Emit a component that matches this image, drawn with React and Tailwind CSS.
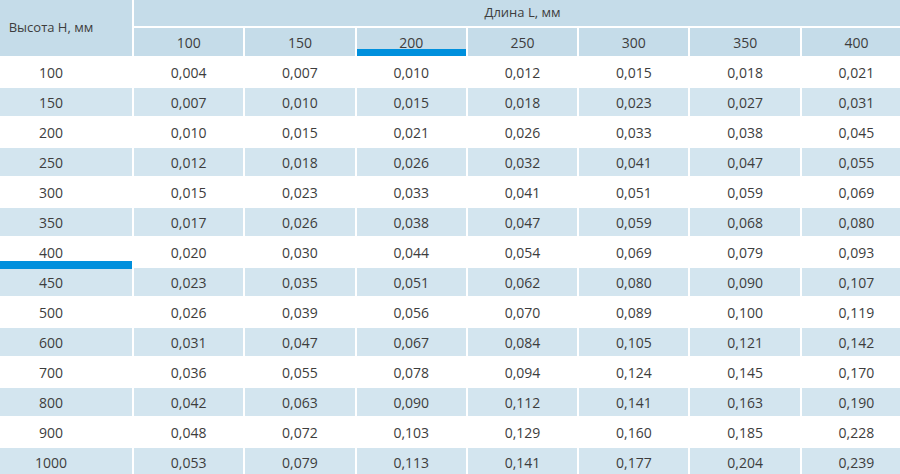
import React from "react";

const cols = ["100", "150", "200", "250", "300", "350", "400"];
const rows = [
  ["100", "0,004", "0,007", "0,010", "0,012", "0,015", "0,018", "0,021"],
  ["150", "0,007", "0,010", "0,015", "0,018", "0,023", "0,027", "0,031"],
  ["200", "0,010", "0,015", "0,021", "0,026", "0,033", "0,038", "0,045"],
  ["250", "0,012", "0,018", "0,026", "0,032", "0,041", "0,047", "0,055"],
  ["300", "0,015", "0,023", "0,033", "0,041", "0,051", "0,059", "0,069"],
  ["350", "0,017", "0,026", "0,038", "0,047", "0,059", "0,068", "0,080"],
  ["400", "0,020", "0,030", "0,044", "0,054", "0,069", "0,079", "0,093"],
  ["450", "0,023", "0,035", "0,051", "0,062", "0,080", "0,090", "0,107"],
  ["500", "0,026", "0,039", "0,056", "0,070", "0,089", "0,100", "0,119"],
  ["600", "0,031", "0,047", "0,067", "0,084", "0,105", "0,121", "0,142"],
  ["700", "0,036", "0,055", "0,078", "0,094", "0,124", "0,145", "0,170"],
  ["800", "0,042", "0,063", "0,090", "0,112", "0,141", "0,163", "0,190"],
  ["900", "0,048", "0,072", "0,103", "0,129", "0,160", "0,185", "0,228"],
  ["1000", "0,053", "0,079", "0,113", "0,141", "0,177", "0,204", "0,239"],
];

export default function App() {
  return (
    <div
      className="w-[900px] h-[474px] overflow-hidden bg-white text-[14px] text-[#3d3d3d]"
      style={{ fontFamily: '"Open Sans", "Noto Sans", sans-serif' }}
    >
      <div className="grid w-[911px] grid-cols-[132px_repeat(7,109.3px)] grid-rows-[26px_28px_repeat(14,28px)] gap-[2px] bg-white">
        <div className="row-span-2 flex items-center justify-center bg-[#c5dce9] pr-[30px] text-[13px]">
          Высота Н, мм
        </div>
        <div className="col-span-7 flex items-center justify-center bg-[#c5dce9] text-[13px]">
          Длина L, мм
        </div>
        {cols.map((c) => (
          <div
            key={c}
            className="relative flex items-center justify-center bg-[#c5dce9]"
          >
            {c}
            {c === "200" && (
              <span className="absolute bottom-0 left-0 right-0 h-[7px] bg-[#0090dd]" />
            )}
          </div>
        ))}
        {rows.map((r, i) => {
          const bg = i % 2 === 1 ? "bg-[#d3e5ef]" : "bg-white";
          return r.map((v, j) => (
            <div
              key={i + "-" + j}
              className={
                "relative flex items-center justify-center " +
                bg +
                (j === 0 ? " pr-[30px]" : "")
              }
            >
              {v}
              {j === 0 && v === "400" && (
                <span className="absolute left-0 right-0 bottom-[-3px] h-[8px] bg-[#0090dd] z-10" />
              )}
            </div>
          ));
        })}
      </div>
    </div>
  );
}
